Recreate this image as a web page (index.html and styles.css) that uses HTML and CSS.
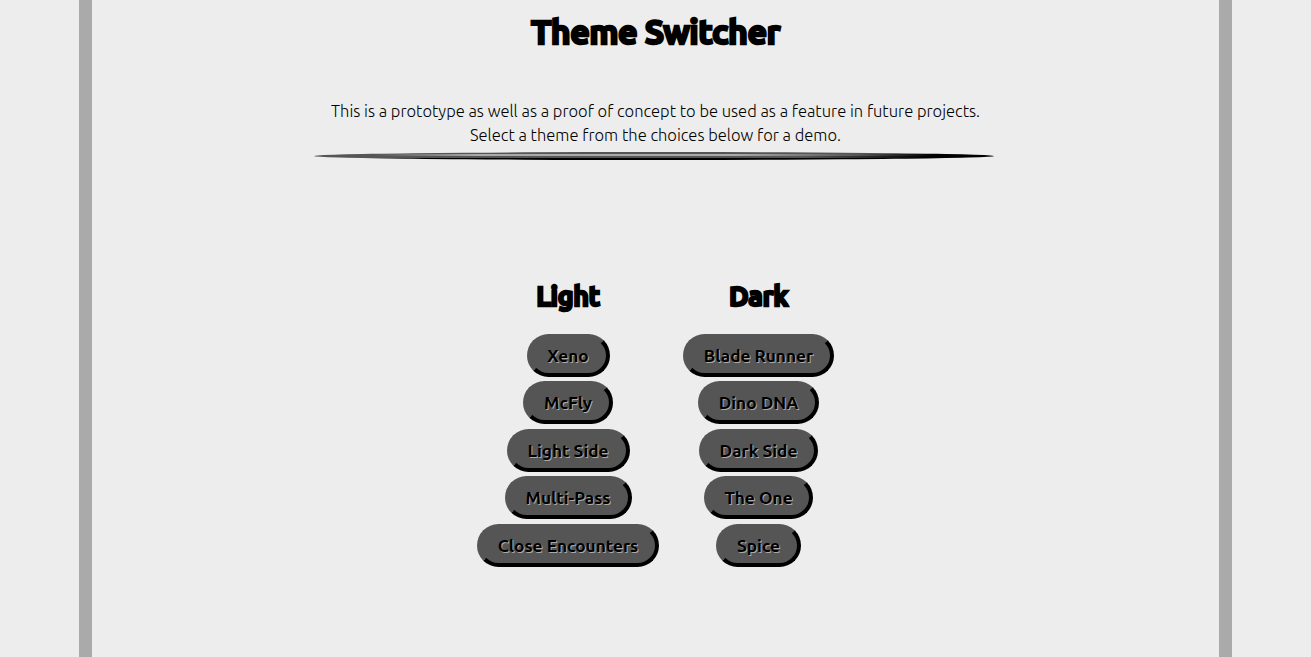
FILE: index.html
```html
<!DOCTYPE html>
<html lang="en">
<head>
<meta charset="utf-8">
<title>Theme Switcher</title>
<link rel="stylesheet" href="styles.css">
</head>
<body>
<main class="page">
  <h1 class="title">Theme Switcher</h1>
  <p class="intro">This is a prototype as well as a proof of concept to be used as a feature in future projects.<br>Select a theme from the choices below for a demo.</p>
  <hr class="rule">
  <section class="themes">
    <div class="column light">
      <h2 class="heading">Light</h2>
      <button class="theme xeno">Xeno</button>
      <button class="theme mcfly">McFly</button>
      <button class="theme light-side">Light Side</button>
      <button class="theme multi-pass">Multi-Pass</button>
      <button class="theme encounters">Close Encounters</button>
    </div>
    <div class="column dark">
      <h2 class="heading">Dark</h2>
      <button class="theme runner">Blade Runner</button>
      <button class="theme dino">Dino DNA</button>
      <button class="theme dark-side">Dark Side</button>
      <button class="theme the-one">The One</button>
      <button class="theme spice">Spice</button>
    </div>
  </section>
</main>
</body>
</html>
```
FILE: styles.css
```css
* { box-sizing: border-box; }
body {
  margin: 0;
  background: #ededed;
  color: #000;
  font-family: Ubuntu, "Open Sans", "Noto Sans", sans-serif;
  overflow: hidden;
}
.page {
  width: 1153px;
  height: 657px;
  margin: 0 auto;
  border: solid #aaa;
  border-width: 0 13px;
  text-align: center;
}
.title {
  margin: 0;
  padding-top: 7px;
  font-size: 34px;
  line-height: 48px;
  font-weight: 700;
  letter-spacing: -0.5px;
  -webkit-text-stroke: 2.4px #000;
}
.intro {
  margin: 44px 0 0;
  font-size: 16.5px;
  line-height: 24px;
  font-weight: 300;
  white-space: nowrap;
}
.rule {
  width: 680px;
  height: 8px;
  margin: 5px 0 0 221.5px;
  border: 0;
  border-radius: 50%;
  background:
    linear-gradient(90deg, #555 84%, #000 91%) 0 0 / 100% 2px no-repeat,
    linear-gradient(90deg, #555 9%, #aaa 24%, #aaa 62%, #555 80%, #000 91%) 0 2px / 100% 2px no-repeat,
    linear-gradient(90deg, #555 72%, #000 90%) 0 4px / 100% 2px no-repeat,
    linear-gradient(90deg, #555 9%, #000 15%) 0 6px / 100% 2px no-repeat;
}
.themes {
  display: flex;
  justify-content: center;
  gap: 24px;
  margin-top: 117px;
}
.column {
  display: flex;
  flex-direction: column;
  align-items: center;
  gap: 4.5px;
}
.light { width: 182px; }
.dark { width: 151px; }
.heading {
  margin: 0 0 12.3px;
  font-size: 27px;
  line-height: 39px;
  padding-bottom: 1px;
  font-weight: 700;
  letter-spacing: -0.4px;
  -webkit-text-stroke: 2.3px #000;
}
.theme {
  height: 43px;
  padding: 0;
  background: #555;
  border: 4px solid;
  border-color: #555 #000 #000 #555;
  border-radius: 22px;
  color: #000;
  font: 600 17.3px/35px Ubuntu, "Open Sans", "Noto Sans", sans-serif;
  text-shadow: 1px 1px 0 #aaa;
  white-space: nowrap;
}
.xeno { width: 83px; }
.mcfly { width: 90px; }
.light-side { width: 123px; }
.multi-pass { width: 127px; }
.encounters { width: 182px; }
.runner { width: 151px; }
.dino { width: 121px; }
.dark-side { width: 119px; }
.the-one { width: 109px; }
.spice { width: 85px; }
```
